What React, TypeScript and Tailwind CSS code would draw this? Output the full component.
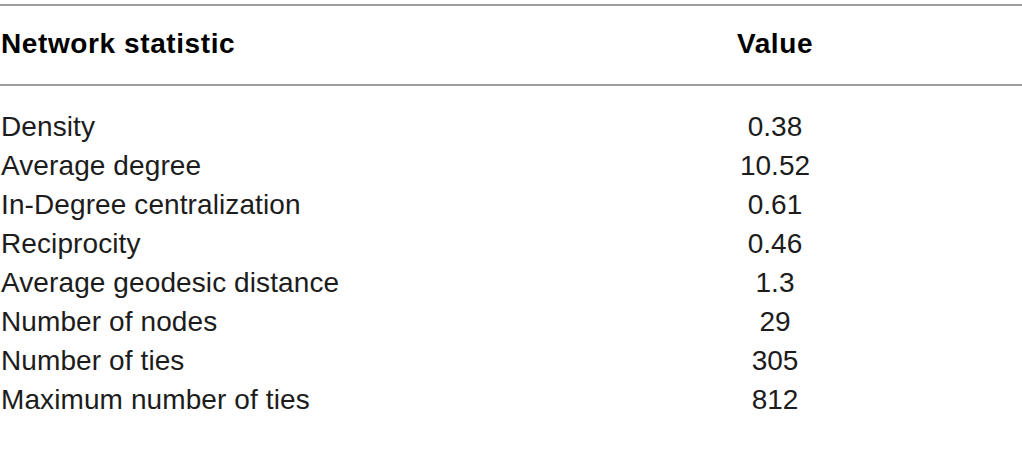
const rows: [string, string][] = [
  ['Density', '0.38'],
  ['Average degree', '10.52'],
  ['In-Degree centralization', '0.61'],
  ['Reciprocity', '0.46'],
  ['Average geodesic distance', '1.3'],
  ['Number of nodes', '29'],
  ['Number of ties', '305'],
  ['Maximum number of ties', '812'],
];

export default function App() {
  return (
    <div
      className="w-[1022px] h-[461px] bg-white pt-[4px] text-[28px] leading-[39px] text-[#1c1c1c]"
      style={{ fontFamily: '"Liberation Sans", Arial, sans-serif' }}
    >
      <div className="border-t-2 border-b-2 border-[#9e9e9e] grid grid-cols-[528px_1fr] pt-[18px] pb-[21px] font-bold text-black">
        <div className="pl-[1px] tracking-[0.6px]">Network statistic</div>
        <div className="text-center tracking-[0.6px]">Value</div>
      </div>
      <div className="grid grid-cols-[528px_1fr] pt-[21px]">
        {rows.map(([label, value]) => (
          <div key={label} className="contents">
            <div className="pl-[1px] tracking-[0.1px]">{label}</div>
            <div className="text-center">{value}</div>
          </div>
        ))}
      </div>
    </div>
  );
}
